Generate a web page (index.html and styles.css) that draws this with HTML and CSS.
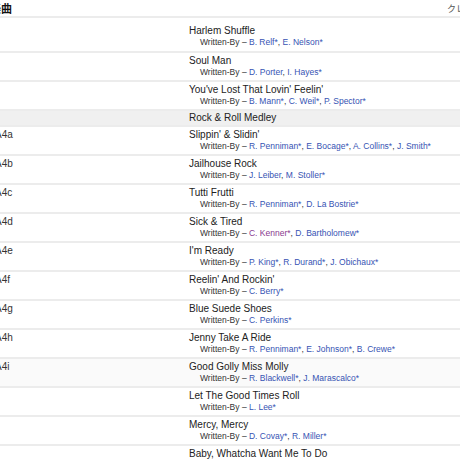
FILE: index.html
```html
<!DOCTYPE html>
<html lang="ja">
<head>
  <meta charset="UTF-8">
  <title>Tracklist</title>
  <link rel="stylesheet" href="styles.css">
</head>
<body>
<div class="tracklist">
  <div class="head">
    <div class="head-pos">楽曲</div>
    <div></div>
    <div class="head-credits">クレジット</div>
  </div>

  <div class="track first">
    <div class="pos"></div>
    <div class="info">
      <div class="title">Harlem Shuffle</div>
      <div class="credits">Written-By – <a href="#">B. Relf*</a>, <a href="#">E. Nelson*</a></div>
    </div>
    <div></div>
  </div>

  <div class="track">
    <div class="pos"></div>
    <div class="info">
      <div class="title">Soul Man</div>
      <div class="credits">Written-By – <a href="#">D. Porter</a>, <a href="#">I. Hayes*</a></div>
    </div>
    <div></div>
  </div>

  <div class="track">
    <div class="pos"></div>
    <div class="info">
      <div class="title">You've Lost That Lovin' Feelin'</div>
      <div class="credits">Written-By – <a href="#">B. Mann*</a>, <a href="#">C. Weil*</a>, <a href="#">P. Spector*</a></div>
    </div>
    <div></div>
  </div>

  <div class="heading">
    <div></div>
    <div class="heading-title">Rock &amp; Roll Medley</div>
    <div></div>
  </div>

  <div class="track">
    <div class="pos">A4a</div>
    <div class="info">
      <div class="title">Slippin' &amp; Slidin'</div>
      <div class="credits">Written-By – <a href="#">R. Penniman*</a>, <a href="#">E. Bocage*</a>, <a href="#">A. Collins*</a>, <a href="#">J. Smith*</a></div>
    </div>
    <div></div>
  </div>

  <div class="track">
    <div class="pos">A4b</div>
    <div class="info">
      <div class="title">Jailhouse Rock</div>
      <div class="credits">Written-By – <a href="#">J. Leiber</a>, <a href="#">M. Stoller*</a></div>
    </div>
    <div></div>
  </div>

  <div class="track">
    <div class="pos">A4c</div>
    <div class="info">
      <div class="title">Tutti Frutti</div>
      <div class="credits">Written-By – <a href="#">R. Penniman*</a>, <a href="#">D. La Bostrie*</a></div>
    </div>
    <div></div>
  </div>

  <div class="track">
    <div class="pos">A4d</div>
    <div class="info">
      <div class="title">Sick &amp; Tired</div>
      <div class="credits">Written-By – <a href="#" class="visited">C. Kenner*</a>, <a href="#">D. Bartholomew*</a></div>
    </div>
    <div></div>
  </div>

  <div class="track">
    <div class="pos">A4e</div>
    <div class="info">
      <div class="title">I'm Ready</div>
      <div class="credits">Written-By – <a href="#">P. King*</a>, <a href="#">R. Durand*</a>, <a href="#">J. Obichaux*</a></div>
    </div>
    <div></div>
  </div>

  <div class="track">
    <div class="pos">A4f</div>
    <div class="info">
      <div class="title">Reelin' And Rockin'</div>
      <div class="credits">Written-By – <a href="#">C. Berry*</a></div>
    </div>
    <div></div>
  </div>

  <div class="track">
    <div class="pos">A4g</div>
    <div class="info">
      <div class="title">Blue Suede Shoes</div>
      <div class="credits">Written-By – <a href="#">C. Perkins*</a></div>
    </div>
    <div></div>
  </div>

  <div class="track">
    <div class="pos">A4h</div>
    <div class="info">
      <div class="title">Jenny Take A Ride</div>
      <div class="credits">Written-By – <a href="#">R. Penniman*</a>, <a href="#">E. Johnson*</a>, <a href="#">B. Crewe*</a></div>
    </div>
    <div></div>
  </div>

  <div class="track shaded">
    <div class="pos">A4i</div>
    <div class="info">
      <div class="title">Good Golly Miss Molly</div>
      <div class="credits">Written-By – <a href="#">R. Blackwell*</a>, <a href="#">J. Marascalco*</a></div>
    </div>
    <div></div>
  </div>

  <div class="track">
    <div class="pos"></div>
    <div class="info">
      <div class="title">Let The Good Times Roll</div>
      <div class="credits">Written-By – <a href="#">L. Lee*</a></div>
    </div>
    <div></div>
  </div>

  <div class="track">
    <div class="pos"></div>
    <div class="info">
      <div class="title">Mercy, Mercy</div>
      <div class="credits">Written-By – <a href="#">D. Covay*</a>, <a href="#">R. Miller*</a></div>
    </div>
    <div></div>
  </div>

  <div class="track">
    <div class="pos"></div>
    <div class="info">
      <div class="title">Baby, Whatcha Want Me To Do</div>
      <div class="credits">Written-By – <a href="#">J. Reed*</a></div>
    </div>
    <div></div>
  </div>
</div>
</body>
</html>
```

FILE: styles.css
```css
body {
  margin: 0;
  overflow: hidden;
  background-color: #fff;
  font-family: "Liberation Sans", Arial, "Noto Sans CJK JP", sans-serif;
  color: #222;
}
.tracklist {
  width: 620px;
  margin-left: -10px;
}
.head, .track, .heading {
  display: grid;
  grid-template-columns: 199px 258px 1fr;
  border-bottom: 2px solid #ececec;
}
.head {
  height: 16px;
  align-items: center;
  font-size: 11px;
}
.head-pos {
  font-weight: bold;
  color: #111;
}
.head-credits {
  font-size: 9px;
  color: #555;
}
.track {
  padding-top: 3px;
  height: 24px;
  font-size: 10px;
}
.track.first {
  padding-top: 8px;
  height: 25px;
}
.track.shaded {
  background-color: #fafafa;
}
.pos {
  padding-left: 5px;
  line-height: 10px;
  color: #333;
}
.title {
  line-height: 10px;
}
.credits {
  padding-left: 11px;
  font-size: 8.5px;
  line-height: 12px;
  color: #333;
  white-space: nowrap;
}
.credits a {
  color: #3653b3;
  text-decoration: none;
}
.credits a.visited {
  color: #8a3a8f;
}
.heading {
  background-color: #f0f0f0;
  height: 14px;
  font-size: 10px;
  line-height: 14px;
}
```
